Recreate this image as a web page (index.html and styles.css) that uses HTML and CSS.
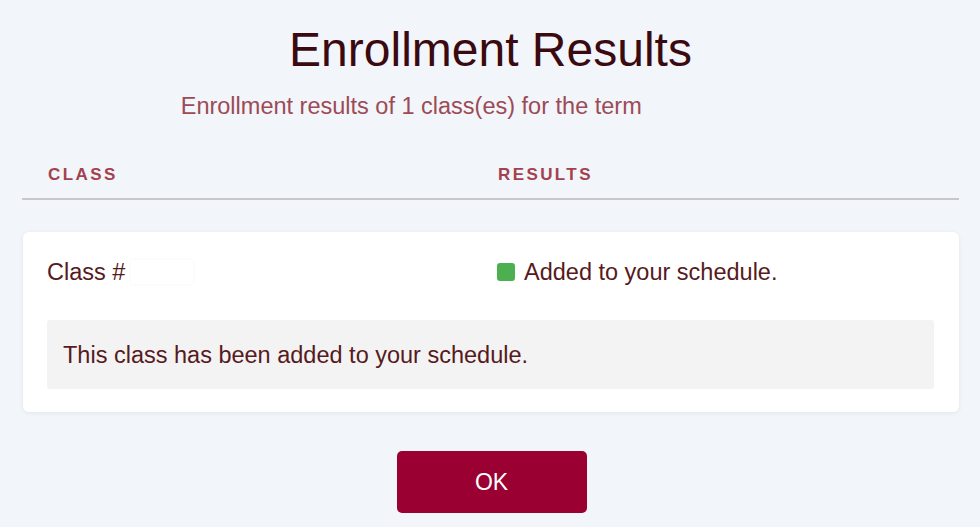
FILE: index.html
```html
<!DOCTYPE html>
<html lang="en">
<head>
<meta charset="utf-8">
<title>Enrollment Results</title>
<link rel="stylesheet" href="styles.css">
</head>
<body>
<main class="dialog">
  <h1 class="title">Enrollment Results</h1>
  <p class="subtitle">Enrollment results of 1 class(es) for the term <span class="term-redacted"></span></p>

  <div class="table-head">
    <div class="th">Class</div>
    <div class="th">Results</div>
  </div>

  <section class="card">
    <div class="row">
      <div class="cell">Class # <span class="num-redacted"></span></div>
      <div class="cell status"><span class="dot"></span>Added to your schedule.</div>
    </div>
    <div class="message">This class has been added to your schedule.</div>
  </section>

  <div class="actions">
    <button class="btn-ok" type="button">OK</button>
  </div>
</main>
</body>
</html>
```

FILE: styles.css
```css
* { box-sizing: border-box; }

html, body {
  margin: 0;
  padding: 0;
  background: #f2f5f9;
  font-family: "Liberation Sans", Arial, sans-serif;
  color: #561a20;
}

.dialog {
  margin: 0 21px 0 22px;
  padding-top: 22px;
}

.title {
  margin: 0;
  text-align: center;
  font-size: 48px;
  line-height: 56px;
  font-weight: 400;
  color: #3a0a10;
}

.subtitle {
  margin: 14px 0 0;
  text-align: center;
  font-size: 23.5px;
  line-height: 28px;
  color: #9c4b56;
}

.term-redacted {
  display: inline-block;
  width: 152px;
  height: 1px;
}

.table-head {
  margin-top: 45px;
  display: grid;
  grid-template-columns: 450px 1fr;
  padding: 0 24px 13px 26px;
  border-bottom: 2px solid #c6c5d0;
}

.th {
  font-size: 17px;
  line-height: 20px;
  font-weight: 700;
  letter-spacing: 2.4px;
  text-transform: uppercase;
  color: #a3424e;
}

.card {
  margin: 32px 0 0 1px;
  background: #ffffff;
  border-radius: 6px;
  box-shadow: 0 1px 4px rgba(40, 40, 70, 0.08);
  padding: 26px 25px 23px 24px;
}

.row {
  display: grid;
  grid-template-columns: 450px 1fr;
  align-items: center;
}

.cell {
  font-size: 23.5px;
  line-height: 28px;
  display: flex;
  align-items: center;
}

.num-redacted {
  display: inline-block;
  width: 62px;
  height: 24px;
  margin-left: 6px;
  background: #ffffff;
  box-shadow: 0 0 3px rgba(0, 0, 0, 0.05);
}

.dot {
  width: 18px;
  height: 18px;
  border-radius: 3px;
  background: #4caf50;
  margin-right: 9px;
  flex: none;
}

.message {
  margin-top: 34px;
  background: #f3f3f3;
  border-radius: 3px;
  padding: 21px 16px 20px;
  font-size: 23.5px;
  line-height: 28px;
}

.actions {
  display: flex;
  justify-content: center;
  padding-top: 39px;
  padding-left: 2px;
}

.btn-ok {
  width: 190px;
  height: 62px;
  border: none;
  border-radius: 5px;
  background: #9a0031;
  color: #ffffff;
  font-family: "Liberation Sans", Arial, sans-serif;
  font-size: 23px;
  cursor: pointer;
}
```
